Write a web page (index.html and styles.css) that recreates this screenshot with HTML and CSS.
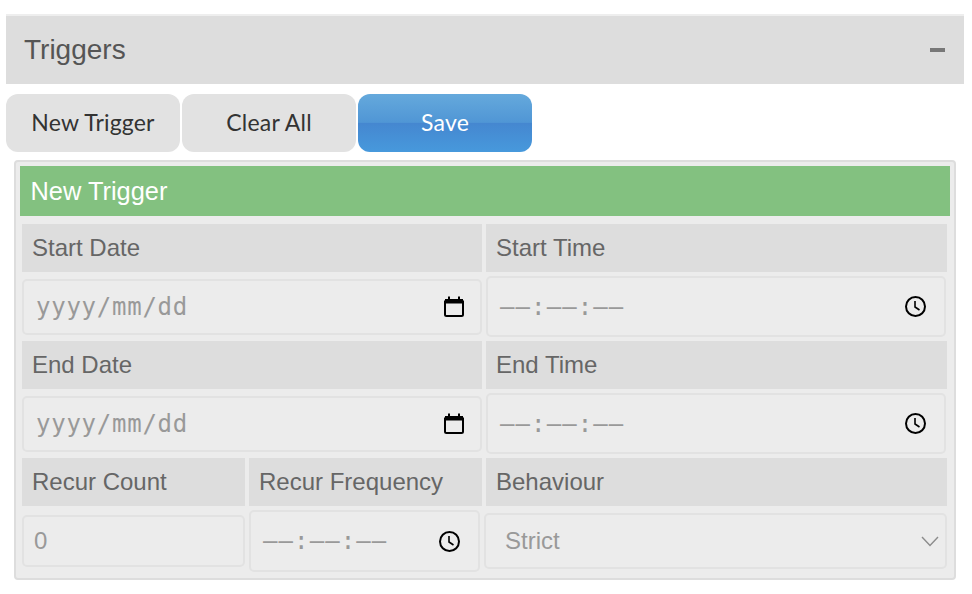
FILE: index.html
```html
<!DOCTYPE html>
<html lang="en">
<head>
<meta charset="UTF-8">
<meta name="viewport" content="width=device-width, initial-scale=1.0">
<title>Triggers</title>
<link rel="stylesheet" href="styles.css">
</head>
<body>
  <div class="section-head">
    <span>Triggers</span>
    <span class="collapse"></span>
  </div>

  <div class="toolbar">
    <button class="btn">New Trigger</button>
    <button class="btn">Clear All</button>
    <button class="btn btn-save">Save</button>
  </div>

  <div class="panel">
    <div class="panel-title">New Trigger</div>
    <div class="trigger-grid">
      <div class="label wide">Start Date</div>
      <div class="label">Start Time</div>
      <div class="field date wide">
        <span class="mono">yyyy/mm/dd</span>
        <svg class="icon" width="20" height="21" viewBox="0 0 20 21"><path d="M1 5.5V18.5Q1 20 2.5 20H17.5Q19 20 19 18.5V5.5Z" fill="none" stroke="#000" stroke-width="2"/><path d="M1 3H4V0.5H6V3H14V0.5H16V3H19V7.5H1Z" fill="#000"/></svg>
      </div>
      <div class="field time">
        <span class="mono">––:––:––</span>
        <svg class="icon" width="21" height="21" viewBox="0 0 21 21"><circle cx="10.5" cy="10.5" r="9.5" fill="none" stroke="#000" stroke-width="2"/><path d="M10 5V11L14.5 14" fill="none" stroke="#000" stroke-width="1.6"/></svg>
      </div>

      <div class="label wide">End Date</div>
      <div class="label">End Time</div>
      <div class="field date wide">
        <span class="mono">yyyy/mm/dd</span>
        <svg class="icon" width="20" height="21" viewBox="0 0 20 21"><path d="M1 5.5V18.5Q1 20 2.5 20H17.5Q19 20 19 18.5V5.5Z" fill="none" stroke="#000" stroke-width="2"/><path d="M1 3H4V0.5H6V3H14V0.5H16V3H19V7.5H1Z" fill="#000"/></svg>
      </div>
      <div class="field time">
        <span class="mono">––:––:––</span>
        <svg class="icon" width="21" height="21" viewBox="0 0 21 21"><circle cx="10.5" cy="10.5" r="9.5" fill="none" stroke="#000" stroke-width="2"/><path d="M10 5V11L14.5 14" fill="none" stroke="#000" stroke-width="1.6"/></svg>
      </div>

      <div class="label">Recur Count</div>
      <div class="label">Recur Frequency</div>
      <div class="label">Behaviour</div>
      <div class="field count">0</div>
      <div class="field time freq">
        <span class="mono">––:––:––</span>
        <svg class="icon" width="21" height="21" viewBox="0 0 21 21"><circle cx="10.5" cy="10.5" r="9.5" fill="none" stroke="#000" stroke-width="2"/><path d="M10 5V11L14.5 14" fill="none" stroke="#000" stroke-width="1.6"/></svg>
      </div>
      <div class="field behaviour">
        <span>Strict</span>
        <svg class="chevron" width="18" height="11" viewBox="0 0 18 11"><path d="M1 1L9 9.5L17 1" fill="none" stroke="#8c8c8c" stroke-width="1.4"/></svg>
      </div>
    </div>
  </div>
</body>
</html>
```

FILE: styles.css
```css
body {
  font-family: "Liberation Sans", Arial, sans-serif;
  margin: 0;
  padding: 14px 8px 0 6px;
  background-color: #fff;
}

.section-head {
  display: flex;
  justify-content: space-between;
  align-items: center;
  height: 68px;
  padding: 0 19px 0 18px;
  background-color: #ddd;
  border-top: 2px solid #eee;
  color: #555;
  font-size: 28px;
}

.collapse {
  width: 15px;
  height: 4px;
  background-color: #777;
}

.toolbar {
  display: flex;
  gap: 2px;
  margin-top: 10px;
}

.btn {
  width: 174px;
  height: 58px;
  padding: 0 0 2px;
  border: none;
  border-radius: 12px;
  background-color: #e2e2e2;
  color: #333;
  font-family: Lato, sans-serif;
  font-size: 23px;
  letter-spacing: 0.2px;
}

.btn-save {
  background: linear-gradient(#65a9dc 0%, #5096d5 49%, #4587d0 50%, #4799dc 100%);
  color: #fff;
}

.panel {
  margin: 8px 8px 0;
  padding: 4px;
  background-color: #ececec;
  border: 2px solid #ddd;
  border-radius: 4px;
}

.panel-title {
  height: 50px;
  line-height: 50px;
  padding-left: 10.5px;
  background-color: #83c180;
  color: #fff;
  font-size: 25.4px;
}

.trigger-grid {
  display: grid;
  grid-template-columns: 223px 233px 461px;
  grid-template-rows: 48px 61px 48px 61px 48px 62px;
  gap: 4px;
  padding: 8px 2px 2px;
}

.wide {
  grid-column: span 2;
}

.label {
  display: flex;
  align-items: center;
  padding-left: 10px;
  background-color: #ddd;
  color: #666;
  font-size: 24px;
}

.field {
  display: flex;
  justify-content: space-between;
  align-items: center;
  box-sizing: border-box;
  background-color: #ececec;
  border: 2px solid #e2e2e2;
  border-radius: 5px;
  color: #999;
  font-size: 24px;
}

.mono {
  font-family: "DejaVu Sans Mono", monospace;
  font-size: 24px;
  letter-spacing: 0.75px;
}

.date {
  align-self: center;
  height: 56px;
  padding: 0 16px 0 12px;
}

.time {
  width: 460px;
  padding: 0 18px 0 12px;
}

.time .mono {
  letter-spacing: 1.1px;
}

.freq {
  width: 231px;
}

.count {
  align-self: center;
  height: 52px;
  padding-left: 10px;
}

.behaviour {
  align-self: center;
  width: 463px;
  height: 56px;
  margin-left: -2px;
  padding: 0 6px 0 19px;
}
```
